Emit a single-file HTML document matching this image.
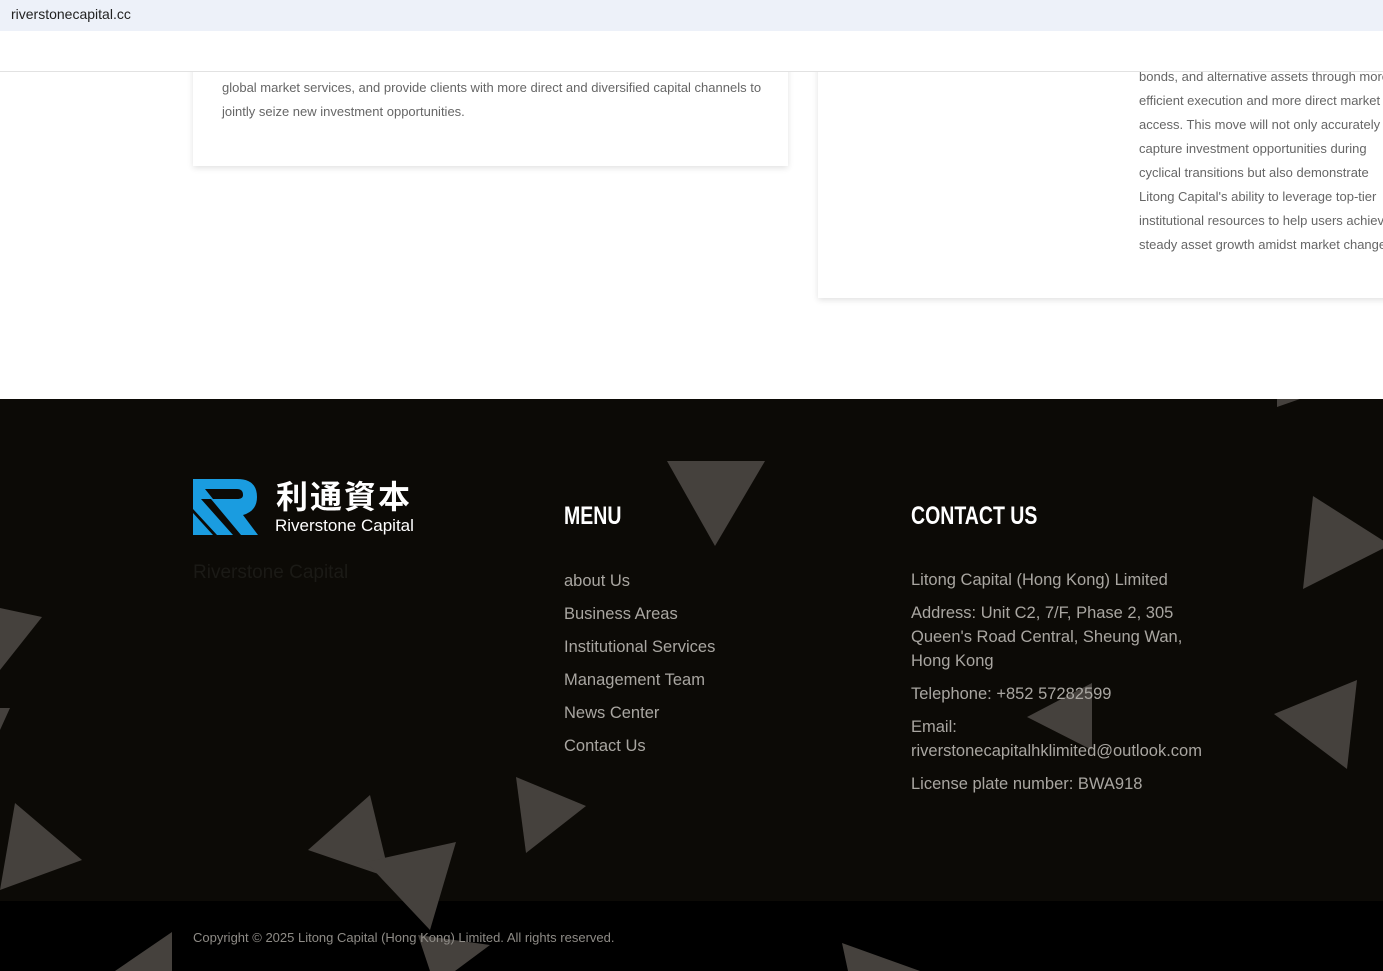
<!DOCTYPE html>
<html><head><meta charset="utf-8"><style>
*{margin:0;padding:0;box-sizing:border-box}
body{width:1383px;height:971px;overflow:hidden;position:relative;background:#fff;font-family:"Liberation Sans","Noto Sans CJK SC",sans-serif}
.url{position:absolute;left:0;top:0;width:1383px;height:31px;background:#edf1f9;font-size:14px;color:#222;padding:6px 11px}
.nav{position:absolute;top:31px;left:0;width:1383px;height:41px;background:#fff;border-bottom:1px solid #e2e2e2;z-index:3}
.card{position:absolute;background:#fff;box-shadow:0 2px 6px rgba(0,0,0,.12)}
.card p{color:#666;font-size:13px;line-height:24px}
.foot{position:absolute;left:0;top:399px;width:1383px;height:502px;background:#0c0a06}
.bar{position:absolute;left:0;top:901px;width:1383px;height:70px;background:#000}
svg.tri{position:absolute;left:0;top:0}
.t{position:absolute;color:#a9a6a1;font-size:16.5px;line-height:24px}
h3{position:absolute;color:#fff;font-size:25px;font-weight:bold;transform:scaleX(.78);transform-origin:left;letter-spacing:0}
</style></head><body>
<div class="url">riverstonecapital.cc</div>
<div class="nav"></div>
<div class="card" style="left:193px;top:40px;width:595px;height:126px;padding:36px 16px 0 29px"><p>global market services, and provide clients with more direct and diversified capital channels to jointly seize new investment opportunities.</p></div>
<div class="card" style="left:818px;top:40px;width:600px;height:258px;padding:25px 0 0 321px"><p style="white-space:nowrap">bonds, and alternative assets through more<br>efficient execution and more direct market<br>access. This move will not only accurately<br>capture investment opportunities during<br>cyclical transitions but also demonstrate<br>Litong Capital's ability to leverage top-tier<br>institutional resources to help users achieve<br>steady asset growth amidst market changes.</p></div>
<div class="foot"></div>
<div class="bar"></div>
<svg class="tri" width="1383" height="971"><g fill="#45413d">
<polygon points="667,461 765,461 715,546"/>
<polygon points="1313,496 1390,545 1303,589"/>
<polygon points="1277,399 1300,399 1277,407"/>
<polygon points="0,608 42,617 0,670"/>
<polygon points="0,708 10,708 0,730"/>
<polygon points="15,803 82,860 0,890"/>
<polygon points="308,850 370,795 390,878"/>
<polygon points="366,862 456,842 430,930"/>
<polygon points="516,777 586,806 526,853"/>
<polygon points="1027,717 1092,683 1092,750"/>
<polygon points="1274,714 1357,680 1347,769"/>
<polygon points="115,971 172,932 172,971"/>
<polygon points="842,943 920,971 848,971"/>
<polygon points="418,935 490,945 455,971 430,971"/>
</g>
<g transform="translate(193,479)">
<path d="M0,0 H44 Q64,0 64,18 Q64,32 50,36 L65,56 H48 L18,20 H8 L40,56 H24 L0,30 Z" fill="#1a9ce0"/>
<path d="M0,34 L20,56 H0 Z" fill="#1a9ce0"/>
<path d="M12,10 H44 Q50,10 50,16 Q50,20 44,20 H20 Z" fill="#0c0a06"/>
</g></svg>
<div style="position:absolute;left:276px;top:477px;color:#fff;font-size:32px;font-weight:bold;letter-spacing:2px;line-height:40px">利通資本</div>
<div style="position:absolute;left:275px;top:516px;color:#fff;font-size:17px">Riverstone Capital</div>
<div style="position:absolute;left:193px;top:562px;color:#1b1a16;font-size:19px">Riverstone Capital</div>
<h3 style="left:564px;top:502px">MENU</h3>
<h3 style="left:911px;top:502px">CONTACT US</h3>
<div class="t" style="left:564px;top:565px;line-height:33px">about Us<br>Business Areas<br>Institutional Services<br>Management Team<br>News Center<br>Contact Us</div>
<div class="t" style="left:911px;top:568px">Litong Capital (Hong Kong) Limited</div>
<div class="t" style="left:911px;top:601px">Address: Unit C2, 7/F, Phase 2, 305<br>Queen's Road Central, Sheung Wan,<br>Hong Kong</div>
<div class="t" style="left:911px;top:682px">Telephone: +852 57282599</div>
<div class="t" style="left:911px;top:715px">Email:<br>riverstonecapitalhklimited@outlook.com</div>
<div class="t" style="left:911px;top:772px">License plate number: BWA918</div>
<div style="position:absolute;left:193px;top:930px;color:#8e8b86;font-size:13px">Copyright © 2025 Litong Capital (Hong Kong) Limited. All rights reserved.</div>
</body></html>
